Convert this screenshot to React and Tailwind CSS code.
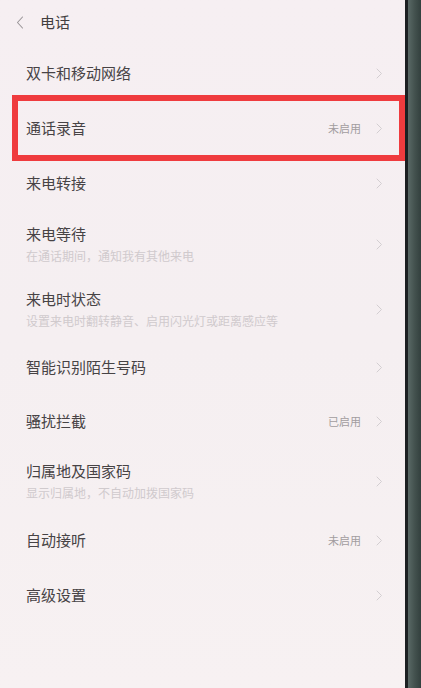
import React from "react";

const rows = [
    { title: "双卡和移动网络", h: "h-[56px]" },
    { title: "通话录音", value: "未启用", h: "h-[54px]", marked: true },
    { title: "来电转接", h: "h-[56px]" },
    { title: "来电等待", sub: "在通话期间，通知我有其他来电", h: "h-[66px]" },
    { title: "来电时状态", sub: "设置来电时翻转静音、启用闪光灯或距离感应等", h: "h-[64px]" },
    { title: "智能识别陌生号码", h: "h-[52px]" },
    { title: "骚扰拦截", value: "已启用", h: "h-[56px]" },
    { title: "归属地及国家码", sub: "显示归属地，不自动加拨国家码", h: "h-[64px]" },
    { title: "自动接听", value: "未启用", h: "h-[54px]" },
    { title: "高级设置", h: "h-[56px]" },
];

const Chevron = ({ className = "" }) => (
    <svg className={className} width="7" height="11" viewBox="0 0 7 11" fill="none">
        <path d="M1 1l4.5 4.5L1 10" stroke="currentColor" strokeWidth="1" strokeLinecap="round" strokeLinejoin="round" />
    </svg>
);

const Row = ({ data }) => {
    return (
        <div className={`relative flex items-center pl-[26px] pr-[22px] ${data.h}`}>
            {data.marked && (
                <div className="absolute left-[12px] right-0 -top-[6px] -bottom-[6px] border-[6px] border-[#ef3b3e] pointer-events-none" />
            )}
            <div className="flex-1 flex flex-col">
                <span className="text-[15px] leading-[20px] text-[#474345]">{data.title}</span>
                {data.sub && (
                    <span className="text-[12px] leading-[16px] mt-[4px] text-[#d0cacd]">{data.sub}</span>
                )}
            </div>
            {data.value && <span className="text-[11px] text-[#a29d9f] mr-[15px]">{data.value}</span>}
            <Chevron className="text-[#d3ced1]" />
        </div>
    );
};

export default function App() {
    return (
        <div className="flex w-[421px] h-[688px] overflow-hidden bg-[#f5eff1]" style={{ fontFamily: '"Noto Sans CJK SC", "Noto Sans", sans-serif' }}>
            <div className="w-[405px] flex flex-col bg-gradient-to-b from-[#f6eff2] via-[#f5eff1] to-[#f7f1f2]">
                <div className="h-[45px] flex items-center pl-[16px] gap-[16px]">
                    <svg width="8" height="13" viewBox="0 0 8 13" fill="none" className="text-[#9a9598]">
                        <path d="M6.5 1L1.5 6.5l5 5.5" stroke="currentColor" strokeWidth="1.1" strokeLinecap="round" strokeLinejoin="round" />
                    </svg>
                    <span className="text-[15px] text-[#423e40]">电话</span>
                </div>
                {rows.map((r, i) => <Row key={i} data={r} />)}
            </div>
            <div className="flex-1 flex">
                <div className="w-[3px] bg-[#1c2022]" />
                <div className="flex-1 bg-gradient-to-r from-[#5a6966] via-[#44524f] to-[#33403e]" />
            </div>
        </div>
    );
}
